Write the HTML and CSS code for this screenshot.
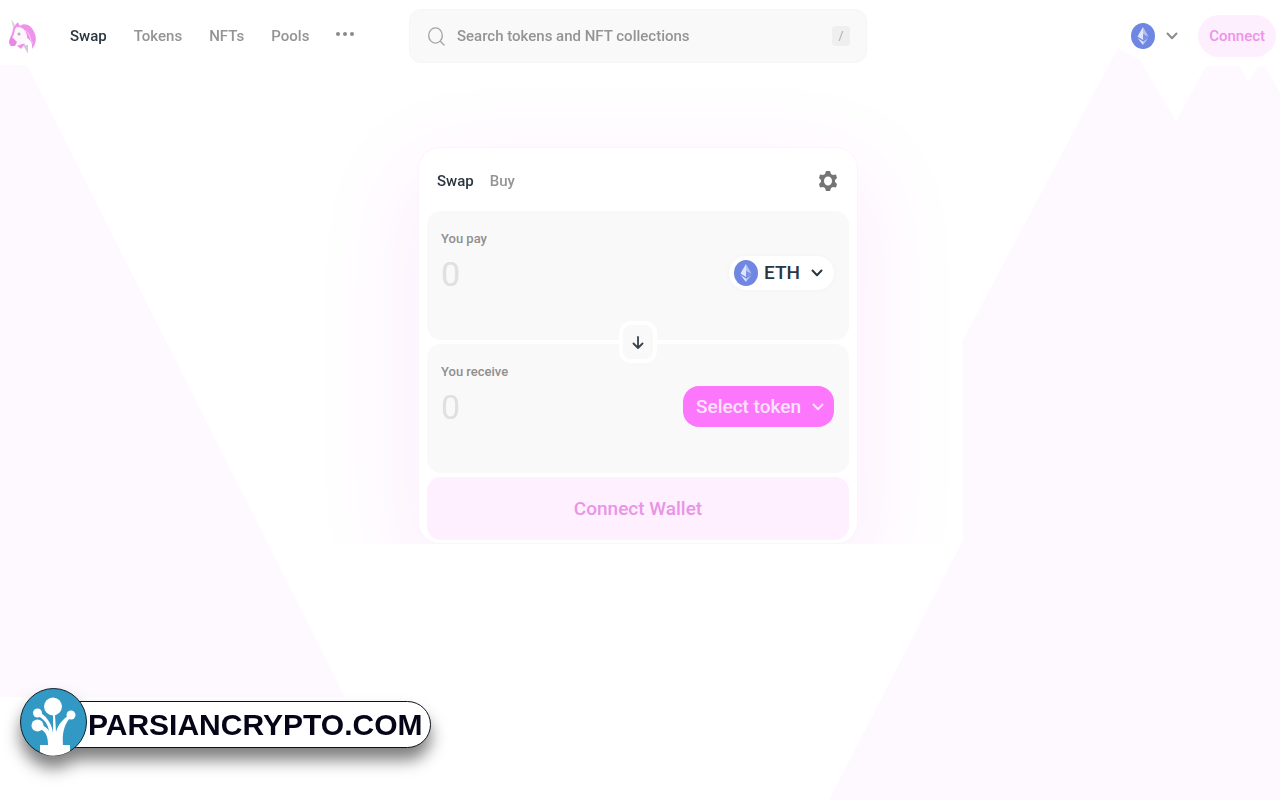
FILE: index.html
```html
<!doctype html>
<html lang="en">
  <head>
    <meta charset="utf-8">
    <title>Swap</title>
    <link rel="stylesheet" href="styles.css">
  </head>
  <body>
    <svg class="backdrop" viewBox="0 0 1280 800" preserveAspectRatio="none" aria-hidden="true">
      <path d="M0 65H27L345 697H0Z"/>
      <path d="M1118 48L963 340V540L829 800H1280V92L1264 66H1258L1248 82L1240 66H1206L1176 121L1140 60Z"/>
    </svg>

    <!-- shared shapes -->
    <svg class="defs" aria-hidden="true">
      <symbol id="eth" viewBox="0 0 24 26">
        <ellipse cx="12" cy="13" rx="12" ry="13" fill="#6f86e2"/>
        <path d="M12 4L6.500 13.500L12 17Z" fill="#dfe6fb"/>
        <path d="M12 4L17.500 13.500L12 17Z" fill="#b4c3f4"/>
        <path d="M6.500 15L12 22V18.500Z" fill="#dfe6fb"/>
        <path d="M17.500 15L12 22V18.500Z" fill="#b4c3f4"/>
        <path d="M12 11L17.500 13.500L12 17Z" fill="#7d92e6"/>
      </symbol>
      <symbol id="chevron" viewBox="0 0 12 8">
        <path d="M1.500 1.500L6 6.200L10.500 1.500" fill="none" stroke="currentColor" stroke-width="2" stroke-linecap="round" stroke-linejoin="round"/>
      </symbol>
    </svg>

    <header class="header">
      <div class="left">
        <a class="logo" href="#" aria-label="Home">
          <svg width="30" height="36" viewBox="0 0 30 36">
            <path d="M3 1L8 8L5 10Z" fill="#dcd8dc"/>
            <path d="M8 9L10 5L12 8C17 4 23 8 25 12C29 18 29 25 24 31C25 25 22 22 19 20C19 13 14 10 8 9Z" fill="#ee93ec"/>
            <path d="M6 11L11 9C16 10 19 14 19 20L17 24L20 32L14 27L8 26L3 28C0 26 1 22 3 20Z" fill="#fdf6fd"/>
            <path d="M10 5L6 11L5 16L3 20" fill="none" stroke="#ee93ec" stroke-width="2"/>
            <path d="M3 19C1 21 0 26 3 28L7 28L9 24L5 20Z" fill="#ea86e6"/>
            <path d="M8 27C11 29 13 25 17 26L13 31Z" fill="#ee93ec"/>
            <path d="M16 27L19 32L19 27" fill="none" stroke="#cfcacf" stroke-width="2"/>
            <path d="M17 12C21 15 22 18 23 23M22 23L25 25" fill="none" stroke="#f8c9f7"/>
            <ellipse cx="11" cy="16" rx="1.500" ry="1.500" fill="#b5adb6"/>
          </svg>
        </a>
        <nav class="nav">
          <a class="active" href="#">Swap</a>
          <a href="#">Tokens</a>
          <a href="#">NFTs</a>
          <a href="#">Pools</a>
          <button class="more" type="button" aria-label="More">
            <svg width="18" height="4" viewBox="0 0 18 4" fill="#8a8a8a"><circle cx="2" cy="2" r="2"/><circle cx="9" cy="2" r="2"/><circle cx="16" cy="2" r="2"/></svg>
          </button>
        </nav>
      </div>
      <label class="search">
        <svg width="17" height="19" viewBox="0 0 17 19" fill="none" stroke="#a5a5a5" stroke-width="1.400" stroke-linecap="round"><ellipse cx="7.500" cy="8.500" rx="6.800" ry="7.600"/><path d="M12.500 14.500L16 18"/></svg>
        <input type="text" placeholder="Search tokens and NFT collections" aria-label="Search tokens and NFT collections">
        <kbd>/</kbd>
      </label>
      <div class="right">
        <button class="network" type="button" aria-label="Network">
          <svg width="24" height="26"><use href="#eth"/></svg>
          <svg width="12" height="8"><use href="#chevron"/></svg>
        </button>
        <button class="connect" type="button">Connect</button>
      </div>
    </header>

    <main class="main">
      <section class="card">
        <div class="tabs">
          <button class="active" type="button">Swap</button>
          <button type="button">Buy</button>
          <button class="settings" type="button" aria-label="Settings">
            <svg width="18" height="20" viewBox="0 0 18 20" fill="#757575" fill-rule="evenodd"><path d="M7 0H11L12 3L14 4L17 3.500L18 7L16 9V11L18 13L17 16.500L14 16L12 17L11 20H7L6 17L4 16L1 16.500L0 13L2 11V9L0 7L1 3.500L4 4L6 3ZM9 5.500A4 4.500 0 1 0 9 14.500A4 4.500 0 1 0 9 5.500Z"/></svg>
          </button>
        </div>
        <div class="panel">
          <div class="amount">
            <label for="pay">You pay</label>
            <input id="pay" type="text" placeholder="0">
          </div>
          <button class="token" type="button">
            <svg width="24" height="26"><use href="#eth"/></svg>
            ETH
            <svg class="arrow" width="12" height="8"><use href="#chevron"/></svg>
          </button>
          <button class="flip" type="button" aria-label="Switch tokens">
            <svg width="12" height="13" viewBox="0 0 12 13" fill="none" stroke="#39424c" stroke-width="1.800" stroke-linecap="round" stroke-linejoin="round"><path d="M6 1V12M1.500 7.500L6 12L10.500 7.500"/></svg>
          </button>
        </div>
        <div class="panel">
          <div class="amount">
            <label for="receive">You receive</label>
            <input id="receive" type="text" placeholder="0">
          </div>
          <button class="token select" type="button">
            Select token
            <svg class="arrow" width="12" height="8"><use href="#chevron"/></svg>
          </button>
        </div>
        <button class="wallet" type="button">Connect Wallet</button>
      </section>
    </main>

    <a class="brand" href="#">
      <svg width="67" height="68" viewBox="0 0 67 68">
        <ellipse cx="33.500" cy="34" rx="33" ry="33.500" fill="#3199c3" stroke="#10202c"/>
        <g fill="#fff">
          <circle cx="33" cy="18.500" r="9"/>
          <circle cx="17.500" cy="25" r="4.500"/>
          <circle cx="17.500" cy="37.500" r="6"/>
          <circle cx="51" cy="27" r="4.500"/>
          <path d="M20 57H28C28 48 26 43 18 40L20 36C25 38 28 41 29 43C28 36 24 31 18 28L21 25C28 30 32 37 33 45L33 26H35L36 44C38 37 42 32 49 27L51 29C44 36 42 46 43 57H50V63C40 69 28 69 20 64Z"/>
        </g>
      </svg>
      <span>PARSIANCRYPTO.COM</span>
    </a>
  </body>
</html>
```

FILE: styles.css
```css
* {box-sizing: border-box;}
body {
  margin: 0;
  min-height: 100vh;
  background: #fff;
  color: #2b3640;
  font: 500 15px/20px Roboto, "Liberation Sans", sans-serif;
}
a {color: inherit; text-decoration: none;}
button {padding: 0; border: 0; background: none; color: inherit; font: inherit; cursor: pointer;}
input {min-width: 0; padding: 0; border: 0; outline: 0; background: none; color: inherit; font: inherit;}
svg {display: block; flex: none;}
.defs {display: none;}

.backdrop {
  position: fixed;
  inset: 0;
  z-index: -2;
  width: 100%;
  height: 100%;
  fill: #fef9ff;
}

/* header */
.header {
  display: grid;
  grid-template-columns: 1fr 458px 1fr;
  align-items: center;
  height: 72px;
  padding-right: 4px;
}
.left {display: flex; align-items: center; gap: 32px; padding-left: 8px;}
.nav {display: flex; align-items: center; gap: 27px; color: #949494;}
.nav .active, .tabs .active {color: #2b3640;}
.more {padding-bottom: 4px;}
.search {
  display: flex;
  align-items: center;
  gap: 12px;
  height: 54px;
  padding: 0 16px 0 18px;
  border: 1px solid #f5f5f5;
  border-radius: 12px;
  background: #f9f9f9;
}
.search input {flex: 1;}
.search input::placeholder {color: #949494; opacity: 1;}
kbd {
  width: 18px;
  border-radius: 4px;
  background: #efefef;
  color: #aaa;
  font: 12px/20px Roboto, sans-serif;
  text-align: center;
}
.right {display: flex; align-items: center; justify-content: flex-end; gap: 20px;}
.network {display: flex; align-items: center; gap: 11px; color: #8c8c8c;}
.connect {
  height: 42px;
  padding: 0 11px;
  border-radius: 21px;
  background: #feeffe;
  color: #ec94ea;
}

/* swap card; the glow stops at the bottom edge of main */
.main {
  display: flex;
  justify-content: center;
  overflow: hidden;
  padding: 75px 4px 0 0;
}
.card {
  display: flex;
  flex-direction: column;
  gap: 4px;
  width: 440px;
  padding: 0 8px 3px;
  border: 1px solid #faf5fa;
  border-radius: 22px;
  background: #fff;
  box-shadow: 0 32px 100px 16px #fdeffd;
}
.tabs {display: flex; align-items: center; gap: 16px; height: 59px; padding: 6px 12px 0 10px; color: #949494;}
.settings {margin-left: auto;}
.panel {
  position: relative;
  display: flex;
  justify-content: space-between;
  height: 129px;
  padding: 18px 15px 0 14px;
  border-radius: 14px;
  background: #f9f9f9;
}
.amount {display: flex; flex: 1; flex-direction: column; min-width: 0;}
.amount label {color: #8f8f8f; font-size: 13px;}
.amount input {width: 100%; height: 50px; font-size: 34px; font-weight: 400;}
.amount input::placeholder {color: #e0e0e0; opacity: 1;}
.token {
  display: flex;
  align-items: center;
  align-self: flex-start;
  gap: 6px;
  height: 34px;
  margin-top: 27px;
  padding: 0 11px 0 5px;
  border-radius: 17px;
  background: #fff;
  box-shadow: 0 0 4px #f2f2f2;
  font-size: 19px;
}
.arrow {margin-left: 5px;}
.select {
  height: 41px;
  margin-top: 24px;
  padding: 0 10px 0 13px;
  border-radius: 16px;
  background: #fc77fc;
  box-shadow: none;
  color: #fde4fd;
}
.flip {
  position: absolute;
  bottom: -23px;
  left: 50%;
  z-index: 1;
  display: grid;
  place-items: center;
  width: 38px;
  height: 42px;
  border: 4px solid #fff;
  border-radius: 12px;
  background: #f9f9f9;
  transform: translateX(-50%);
}
.wallet {
  height: 63px;
  border-radius: 14px;
  background: #fef0fe;
  color: #e895e6;
  font-size: 19px;
}

/* site badge */
.brand {
  position: fixed;
  bottom: 44px;
  left: 20px;
  display: flex;
  align-items: center;
  color: #050517;
  font: bold 30px/45px "Liberation Sans", Arial, sans-serif;
  filter: drop-shadow(0 12px 8px rgba(0, 0, 0, .5));
}
.brand svg {position: relative; z-index: 1;}
.brand span {
  margin: 4px 0 0 -34px;
  padding: 0 8px 0 34px;
  border: 1px solid #10101c;
  border-radius: 24px;
  background: #fff;
}
```
